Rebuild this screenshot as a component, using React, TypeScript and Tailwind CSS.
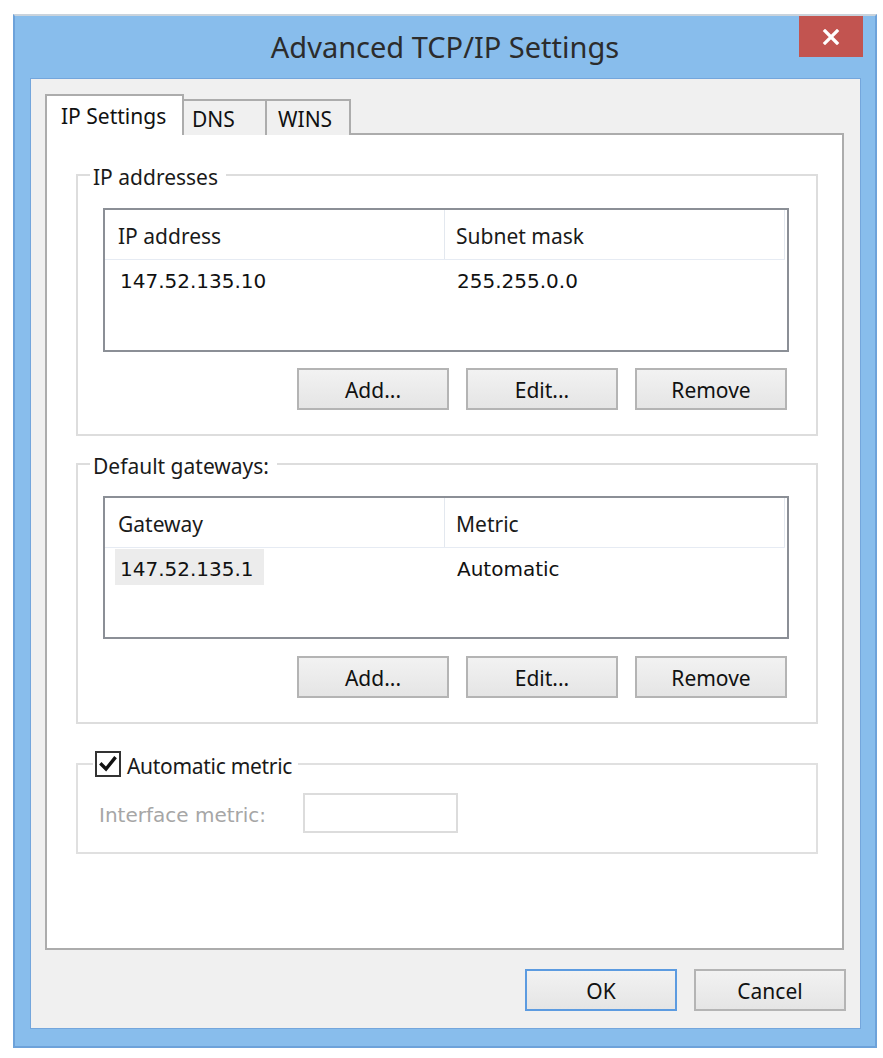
import React from "react";

const SEGOE = "font-['Noto_Sans',_'Open_Sans',_sans-serif]";
const TAHOMA = "font-['DejaVu_Sans',_'Liberation_Sans',_sans-serif]";

function WinButton({ label, primary = false }: { label: string; primary?: boolean }) {
  return (
    <div
      className={`w-[152px] h-[42px] flex items-center justify-center pt-[4px] border-2 bg-gradient-to-b from-[#f2f2f2] to-[#e5e5e5] text-[21px] text-[#111] ${SEGOE} ${
        primary ? "border-[#5c9be0]" : "border-[#b4b4b4]"
      }`}
    >
      {label}
    </div>
  );
}

function ListView({
  col1,
  col2,
  v1,
  v2,
  selected = false,
  heightClass,
}: {
  col1: string;
  col2: string;
  v1: string;
  v2: string;
  selected?: boolean;
  heightClass: string;
}) {
  return (
    <div className={`w-[686px] ${heightClass} border-2 border-[#8b8f96] bg-white flex flex-col`}>
      <div className="flex h-[50px] border-b border-[#e6ebf3] mr-[2px]">
        <div className={`w-[340px] border-r border-[#e3e8ef] flex items-center pl-[13px] pt-[5px] text-[21px] text-[#1a1a1a] ${SEGOE}`}>
          {col1}
        </div>
        <div className={`flex-1 border-r border-[#e3e8ef] flex items-center pl-[11px] pt-[5px] text-[21px] text-[#1a1a1a] ${SEGOE}`}>
          {col2}
        </div>
      </div>
      <div className="flex h-[36px] mt-[1px]">
        <div className="w-[340px] pl-[10px] flex">
          <div
            className={`h-full flex items-center pl-[5px] pr-[10px] pt-[3px] text-[20px] text-[#111] ${TAHOMA} ${
              selected ? "bg-[#ececec]" : ""
            }`}
          >
            {v1}
          </div>
        </div>
        <div className={`flex-1 flex items-center pl-[12px] pt-[3px] text-[20px] text-[#111] ${TAHOMA}`}>{v2}</div>
      </div>
    </div>
  );
}

function ButtonRow() {
  return (
    <div className="w-[686px] flex justify-end gap-[17px] pr-[2px]">
      <WinButton label="Add..." />
      <WinButton label="Edit..." />
      <WinButton label="Remove" />
    </div>
  );
}

export default function App() {
  return (
    <div className="w-[883px] h-[1058px] bg-white pt-[14px] pl-[13px]">
      <div className="w-[864px] h-[1034px] bg-[#88bdec] border-2 border-[#6da2da] border-t-[#c9d3dc] flex flex-col">
        {/* Title bar */}
        <div className="relative h-[62px] flex items-center justify-center">
          <div className={`text-[29px] text-[#2c2c2c] ${SEGOE}`}>Advanced TCP/IP Settings</div>
          <div className="absolute right-[12px] top-0 w-[64px] h-[41px] bg-[#c25450] flex items-center justify-center">
            <svg width="18" height="16" viewBox="0 0 18 16">
              <path d="M3 2 L15 14 M15 2 L3 14" stroke="#ffffff" strokeWidth="3.2" strokeLinecap="square" />
            </svg>
          </div>
        </div>
        {/* Client area */}
        <div className="ml-[15px] mr-[14px] h-[951px] bg-[#f0f0f0] border border-[#74a6dc] flex flex-col pl-[14px] pr-[13px] pt-[15px]">
          {/* Tabs */}
          <div className="flex items-end h-[41px] relative z-10">
            <div className={`w-[139px] h-[41px] bg-white border-2 border-b-0 border-[#acacac] flex items-center pl-[14px] pt-[2px] text-[21px] text-[#111] ${SEGOE}`}>
              IP Settings
            </div>
            <div className={`w-[85px] h-[36px] -ml-[2px] bg-[#f0f0f0] border-2 border-b-0 border-[#acacac] flex items-center pl-[8px] pt-[4px] text-[21px] text-[#111] ${SEGOE}`}>
              DNS
            </div>
            <div className={`w-[86px] h-[36px] -ml-[2px] bg-[#f0f0f0] border-2 border-b-0 border-[#acacac] flex items-center pl-[11px] pt-[4px] text-[21px] text-[#111] ${SEGOE}`}>
              WINS
            </div>
          </div>
          {/* Panel */}
          <div className="w-[799px] h-[817px] -mt-[2px] bg-white border-2 border-[#acacac] pl-[29px] pt-[27px] flex flex-col">
            {/* Group 1 */}
            <fieldset className="w-[742px] border-2 border-[#dddddd] px-0 pt-[20px] pb-[24px] m-0">
              <legend className={`ml-[12px] pl-[3px] pr-[8px] leading-[22px] pt-[4px] text-[21px] text-[#1a1a1a] ${SEGOE}`}>IP addresses</legend>
              <div className="pl-[25px] flex flex-col gap-[16px]">
                <ListView col1="IP address" col2="Subnet mask" v1="147.52.135.10" v2="255.255.0.0" heightClass="h-[144px]" />
                <ButtonRow />
              </div>
            </fieldset>
            {/* Group 2 */}
            <fieldset className="w-[742px] mt-[15px] border-2 border-[#dddddd] px-0 pt-[19px] pb-[24px] m-0">
              <legend className={`ml-[12px] pl-[3px] pr-[8px] leading-[22px] pt-[4px] text-[21px] text-[#1a1a1a] ${SEGOE}`}>Default gateways:</legend>
              <div className="pl-[25px] flex flex-col gap-[17px]">
                <ListView col1="Gateway" col2="Metric" v1="147.52.135.1" v2="Automatic" selected heightClass="h-[143px]" />
                <ButtonRow />
              </div>
            </fieldset>
            {/* Group 3 */}
            <fieldset className="w-[742px] mt-[27px] border-2 border-[#e0e0e0] px-0 pt-[16px] pb-[19px] m-0">
              <legend className="ml-[15px] pl-[2px] pr-[6px] h-[26px] flex items-center gap-[6px]">
                <span className="w-[26px] h-[26px] border-2 border-[#333333] bg-white flex items-center justify-center">
                  <svg width="20" height="20" viewBox="0 0 20 20">
                    <path d="M3.5 10.5 L8 15 L16.5 4.5" stroke="#111" strokeWidth="3.4" fill="none" strokeLinecap="square" />
                  </svg>
                </span>
                <span className={`text-[21px] text-[#1a1a1a] ${SEGOE} leading-[22px] pt-[4px] tracking-[-0.3px]`}>Automatic metric</span>
              </legend>
              <div className="pl-[21px] flex items-center">
                <span className={`w-[204px] pt-[3px] text-[20px] text-[#a6a6a6] ${TAHOMA}`}>Interface metric:</span>
                <div className="w-[155px] h-[40px] border-2 border-[#dcdcdc] bg-white" />
              </div>
            </fieldset>
          </div>
          {/* Bottom buttons */}
          <div className="flex justify-end gap-[17px] mt-[19px] pr-[1px]">
            <WinButton label="OK" primary />
            <WinButton label="Cancel" />
          </div>
        </div>
      </div>
    </div>
  );
}
